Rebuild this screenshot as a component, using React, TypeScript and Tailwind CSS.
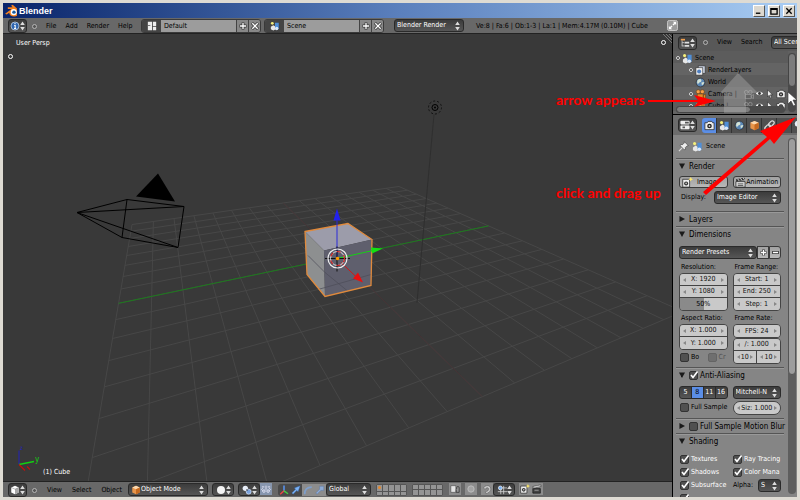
import React from 'react';

type Point = [number, number];

// corners of the grid floor on screen: far, right, near, left
const FLOOR: Point[] = [[399, 186], [683, 311], [73, 570], [132, 224]];

// maps a point of the unit square onto the floor quad
const project = (u: number, v: number): Point => {
  const [[x0, y0], [x1, y1], [x2, y2], [x3, y3]] = FLOOR;
  const dx1 = x1 - x2, dx2 = x3 - x2, sx = x0 - x1 + x2 - x3;
  const dy1 = y1 - y2, dy2 = y3 - y2, sy = y0 - y1 + y2 - y3;
  const det = dx1 * dy2 - dx2 * dy1;
  const g = (sx * dy2 - dx2 * sy) / det;
  const h = (dx1 * sy - sx * dy1) / det;
  const w = g * u + h * v + 1;
  return [
    ((x1 - x0 + g * x1) * u + (x3 - x0 + h * x3) * v + x0) / w,
    ((y1 - y0 + g * y1) * u + (y3 - y0 + h * y3) * v + y0) / w,
  ];
};

const segment = (a: Point, b: Point) => `M${a[0].toFixed(1)} ${a[1].toFixed(1)}L${b[0].toFixed(1)} ${b[1].toFixed(1)}`;

const gridPath = Array.from({ length: 17 }, (_, i) => i / 16)
  .map((t) => segment(project(t, 0), project(t, 1)) + segment(project(0, t), project(1, t)))
  .join('');
const greenAxis = segment(project(0.5, 0), project(0.5, 1));
const redAxis = segment(project(0, 0.5), project(1, 0.5));

const DARK = 'border border-[#2a2a2a] bg-linear-to-b from-[#3c3c3c] to-[#565656] text-white';
const LIGHT = 'border border-[#3a3a3a] bg-linear-to-b from-[#a2a2a2] to-[#b8b8b8] text-black';

function UpDown() {
  return (
    <svg viewBox="0 0 5 10" className="pointer-events-none h-[10px] w-[5px] shrink-0" fill="#ddd">
      <path d="M2.5 0.5 4.8 4H.2zM2.5 9.500.2 6h4.600z" />
    </svg>
  );
}

type IconName =
  | 'info' | 'layout' | 'scene' | 'tree' | 'props' | 'camera' | 'world' | 'cube' | 'link' | 'wrench'
  | 'layers' | 'movie' | 'cubeWhite' | 'sphere' | 'pivot' | 'manip' | 'axes' | 'arrow' | 'arc' | 'scale'
  | 'lock' | 'ring' | 'magnet' | 'snap' | 'clap' | 'shot' | 'pin' | 'eye' | 'cursor' | 'full' | 'blender' | 'cam' | 'camGrey';

const ICONS: Record<IconName, React.ReactNode> = {
  blender: (
    <>
      <path d="M1 9 7 4.500H3.500V3H8L6.500 1.500 8 .8l5 4.200c2 2 1 6.500-3.500 6.500-3 0-4.500-1.500-4.700-3.500L2.500 9.800z" fill="#f58220" />
      <circle cx="9" cy="7.500" r="2.800" fill="#fff" />
      <circle cx="9.200" cy="7.500" r="1.600" fill="#1b5fa5" />
    </>
  ),
  info: (
    <>
      <circle cx="6" cy="6" r="4.800" fill="#2f66b0" stroke="#dbe6f5" strokeWidth=".8" />
      <path d="M6 2.500v1.500M5 5.300h1.200V9M4.800 9h2.600" stroke="#fff" strokeWidth="1.300" fill="none" />
    </>
  ),
  layout: (
    <>
      <path d="M1 1h5v10H1zM7 1h4v5H7zM7 7h4v4H7z" fill="#eee" />
      <path d="M1 5h3v1H1z" fill="#555" />
    </>
  ),
  scene: (
    <>
      <circle cx="2.800" cy="2.800" r="1.700" fill="#f5f07a" />
      <path d="M1 7 4 5l3 2v3L4 11.500 1 10z" fill="#e8e8e8" />
      <path d="M6 2h4.500v7.500L8 10.500 6 9z" fill="#4f8fd8" />
      <circle cx="8" cy="9" r="2" fill="#dce9fa" />
    </>
  ),
  tree: (
    <>
      <path d="M1 1h5v2H1z" fill="#f0a050" />
      <path d="M2.500 3v7M2.500 5.500H5M2.500 9.500H5" stroke="#ccc" fill="none" />
      <path d="M5.500 4.500H11v2H5.500zM5.500 8.500H11v2H5.500z" fill="#ddd" />
    </>
  ),
  props: (
    <>
      <rect x=".5" y="1" width="11" height="4.300" rx="1" fill="#eee" />
      <rect x=".5" y="6.700" width="11" height="4.300" rx="1" fill="#eee" />
      <path d="M6 2h4.500v2.300H6zM3 7.800h3V10H3z" fill="#555" />
    </>
  ),
  camera: (
    <>
      <path d="M1 3h2.500L4.500 1.500h4L9.500 3H11v7.500H1z" fill="#eee" stroke="#222" strokeWidth=".8" />
      <circle cx="6" cy="6.500" r="2.500" fill="#222" />
      <circle cx="6" cy="6.500" r="1" fill="#ccc" />
    </>
  ),
  world: (
    <>
      <circle cx="6" cy="6" r="4.800" fill="#5a86b4" stroke="#333" strokeWidth=".8" />
      <path d="M3 3c2-1.500 4-1 4 1S4 5 3.500 8C2 7 2 5 3 3zM7 6l3-.5c0 2-1 3-2.500 3.500z" fill="#d5e3d5" />
    </>
  ),
  cube: (
    <>
      <path d="m6 1 4.500 2v6L6 11.200 1.500 9V3z" fill="#e8954a" />
      <path d="m6 1 4.500 2L6 5 1.500 3z" fill="#fbd9b0" />
      <path d="M6 5v6.200L10.500 9V3z" fill="#c5691f" />
    </>
  ),
  cubeWhite: (
    <>
      <path d="m6 1 4.500 2v6L6 11.200 1.500 9V3z" fill="#fff" />
      <path d="M6 5v6.200L10.500 9V3z" fill="#a8a8a8" />
      <path d="m1.500 3 4.500 2 4.500-2" stroke="#777" strokeWidth=".6" fill="none" />
    </>
  ),
  link: (
    <g fill="none" stroke="#ddd" strokeWidth="1.300">
      <rect x="4" y="-.3" width="4" height="6.800" rx="2" transform="rotate(45 6 6)" />
      <rect x="4" y="5.500" width="4" height="6.800" rx="2" transform="rotate(45 6 6)" />
    </g>
  ),
  wrench: <path d="M2 10.500 7 5.500c-.7-2 .5-4 2.500-4L8.500 3.500l1 1 2-1c.2 2-1.500 3.500-3.500 3L3 11.500z" fill="#9db9de" />,
  layers: (
    <>
      <rect x="3.500" y="1" width="7.500" height="8" fill="#cfd8e8" stroke="#333" strokeWidth=".7" />
      <rect x="1" y="3" width="7.500" height="8" fill="#eee" stroke="#333" strokeWidth=".7" />
      <circle cx="4.500" cy="7" r="2.200" fill="#4f7fc0" />
    </>
  ),
  movie: (
    <>
      <path d="M1 5h10v6H1z" fill="#ddd" stroke="#222" strokeWidth=".8" />
      <path d="M1 2.500 10.500.8l.5 2.400L1.500 5z" fill="#333" />
      <path d="m3 2.200 1.500 2M6 1.600l1.500 2M9 1.200l1.300 1.800" stroke="#fff" strokeWidth=".9" />
      <path d="M3 7.500h6M3 9.300h6" stroke="#333" strokeWidth=".8" />
    </>
  ),
  sphere: <circle cx="6" cy="6" r="4.800" fill="#f4f4f4" />,
  pivot: (
    <>
      <circle cx="4" cy="4" r="3.200" fill="#e8eef8" />
      <circle cx="8" cy="8" r="3" fill="#7ba3dd" stroke="#dfe9f9" strokeWidth=".8" />
      <circle cx="6" cy="6" r="1" fill="#222" />
    </>
  ),
  manip: (
    <g stroke="#eef" strokeWidth="1" fill="none">
      <path d="M1 3.500h3M8 3.500h3M2 8 .8 6.500 2 5M10 8l1.200-1.500L10 5" />
      <circle cx="3.500" cy="8.500" r="1.500" />
      <circle cx="8.500" cy="8.500" r="1.500" />
      <path d="M6 2v5" />
    </g>
  ),
  axes: (
    <>
      <path d="M6 7V.5" stroke="#5b9bff" strokeWidth="1.700" />
      <path d="m6 7-4.500 4" stroke="#e44" strokeWidth="1.700" />
      <path d="m6 7 4.800 3.500" stroke="#4c4" strokeWidth="1.700" />
    </>
  ),
  arrow: <path d="m1 9.500 4.500-4.500L4 3.500 11 1 8.500 8 7 6.500 2.500 11z" fill="#7db3f5" stroke="#2b5ea5" strokeWidth=".5" />,
  arc: <path d="M2 11c0-5 3-8.500 8.500-8.500" fill="none" stroke="#7f9fcb" strokeWidth="2" />,
  scale: <path d="m1 9.500 4.500-4.500V1.500h5v5H7L2.500 11z" fill="#8facd6" stroke="#55709a" strokeWidth=".5" />,
  lock: (
    <>
      <path d="M1 2h6v8H1z" fill="#e4e4e4" stroke="#333" strokeWidth=".6" />
      <path d="M8 6V4.500c0-2 3-2 3 0V10H7.500V6.500" fill="#999" stroke="#222" strokeWidth=".8" />
    </>
  ),
  ring: <circle cx="6" cy="6" r="3.800" fill="#a4a4a4" stroke="#c2c2c2" />,
  magnet: <path d="M2 4.500C5 0 11 2 10.500 6.500 10 9.500 7 11 5 11.500L4 9.500c2.500-.5 4.500-2 4-4C7.500 4 5 4 3.500 6.500z" fill="#ccc" stroke="#555" strokeWidth=".6" />,
  snap: (
    <>
      <path d="M4.500 5.500V11M8 1v10M6 3.500h6M1 8h11" stroke="#ddd" strokeWidth=".9" />
      <circle cx="4" cy="3.500" r="2.300" fill="#7db3f5" stroke="#fff" strokeWidth=".8" />
    </>
  ),
  shot: (
    <>
      <path d="M.8 2.500h7.500v8.500H.8z" fill="#eee" stroke="#222" strokeWidth=".8" />
      <circle cx="4.500" cy="7" r="2.200" fill="#333" />
      <circle cx="4.500" cy="7" r=".9" fill="#ccc" />
      <path d="m9.500 0 .8 1.700 1.700.8-1.700.8-.8 1.700-.8-1.700L7 2.500l1.700-.8z" fill="#ffe96a" />
    </>
  ),
  clap: (
    <>
      <path d="M1 5.500h9V11H1z" fill="#444" stroke="#111" strokeWidth=".8" />
      <path d="M1 3 10.500 1l.4 2L1.500 5z" fill="#ddd" stroke="#222" strokeWidth=".6" />
      <path d="m3.500 2.500 1 1.800M6.500 2l1 1.800M3 7.500h5" stroke="#bbb" strokeWidth=".8" />
    </>
  ),
  pin: (
    <>
      <path d="M7 .8 11.200 5l-1.500.4-1.700 1.700.2 2L6.800 9.500 2.500 5.200l.5-1.400 2 .2L6.700 2.300z" fill="#eee" stroke="#333" strokeWidth=".6" />
      <path d="M4.500 7.500 1 11" stroke="#ddd" strokeWidth="1.200" />
    </>
  ),
  eye: (
    <>
      <path d="M.8 6C3 2.500 9 2.500 11.200 6 9 9.500 3 9.500.8 6z" fill="#eee" stroke="#333" strokeWidth=".6" />
      <circle cx="6" cy="6" r="1.900" fill="#333" />
    </>
  ),
  cursor: <path d="M3 1v8.500l2-2L6.500 11l1.500-.7L6.500 7H9z" fill="#eee" stroke="#222" strokeWidth=".7" />,
  full: (
    <>
      <rect x=".5" y=".5" width="11" height="11" rx="2" fill="#9a9a9a" stroke="#ccc" />
      <path d="M6.500 2H10v3.500L8.800 4.300 7 6 6 5l1.700-1.800zM5.500 10H2V6.500l1.200 1.200L5 6l1 1-1.700 1.800z" fill="#fff" />
    </>
  ),
  cam: (
    <>
      <circle cx="3.500" cy="3" r="2.200" fill="#f5a04a" stroke="#6b3a0c" strokeWidth=".6" />
      <circle cx="8" cy="3" r="2.200" fill="#f5a04a" stroke="#6b3a0c" strokeWidth=".6" />
      <path d="M2.500 5.500h6.500v5H2.500zM9 7l2.500-1.500v5L9 9.200z" fill="#e88a2a" stroke="#6b3a0c" strokeWidth=".6" />
    </>
  ),
  camGrey: (
    <g fill="none" stroke="#999" strokeWidth=".8">
      <circle cx="3.500" cy="3.500" r="2" />
      <circle cx="8" cy="3.500" r="2" />
      <path d="M2.500 6h6.500v4.500H2.500zM9 7.500 11.500 6v4.500L9 9.200z" />
    </g>
  ),
};

function Icon({ name, className = 'size-[11px]' }: { name: IconName; className?: string }) {
  return (
    <svg viewBox="0 0 12 12" className={`shrink-0 ${className}`}>
      {ICONS[name]}
    </svg>
  );
}

function EditorButton({ icon, label }: { icon: IconName; label: string }) {
  return (
    <button aria-label={label} className={`flex h-[14px] w-[19px] shrink-0 items-center justify-between rounded-[3px] px-px ${DARK}`}>
      <Icon name={icon} className="size-[10px]" />
      <UpDown />
    </button>
  );
}

function Collapse() {
  return <button aria-label="Collapse menus" className="size-[5px] shrink-0 rounded-full border border-[#b5b5b5] bg-[#555]" />;
}

function Select({ label, value, className = '', icon }: { label: string; value: string; className?: string; icon?: IconName }) {
  return (
    <div className={`flex h-[13px] shrink-0 items-center overflow-hidden rounded-[3px] pr-[3px] pl-[2px] ${DARK} ${className}`}>
      {icon && <Icon name={icon} className="size-[10px]" />}
      <select aria-label={label} className="h-[11px] min-w-0 flex-1 appearance-none truncate leading-[11px] outline-none">
        <option>{value}</option>
      </select>
      <UpDown />
    </div>
  );
}

function Datablock({ icon, value }: { icon: IconName; value: string }) {
  return (
    <div className="flex h-[14px] shrink-0 overflow-hidden rounded-[3px] border border-[#3a3a3a]">
      <button aria-label={`Browse ${value}`} className="flex w-[19px] items-center justify-center bg-[#444]">
        <Icon name={icon} className="size-[10px]" />
      </button>
      <input aria-label={`${value} name`} defaultValue={value} className="w-[75px] bg-[#9c9c9c] px-[3px] pt-px text-black" />
      <button aria-label="Add" className="flex w-[12px] items-center justify-center border-l border-[#444] bg-[#888]">
        <svg viewBox="0 0 8 8" className="size-[8px]"><path d="M4 .5v7M.5 4h7" stroke="#333" strokeWidth="2.800" /><path d="M4 1v6M1 4h6" stroke="#fff" strokeWidth="1.300" /></svg>
      </button>
      <button aria-label="Remove" className="flex w-[12px] items-center justify-center border-l border-[#444] bg-[#888]">
        <svg viewBox="0 0 8 8" className="size-[8px]"><path d="m1 1 6 6M7 1 1 7" stroke="#333" strokeWidth="2.800" /><path d="m1.300 1.300 5.400 5.400M6.700 1.300 1.300 6.700" stroke="#fff" strokeWidth="1.300" /></svg>
      </button>
    </div>
  );
}

function Check({ label, checked = false, light = false, dim = false, className = '' }: { label: string; checked?: boolean; light?: boolean; dim?: boolean; className?: string }) {
  return (
    <label className={`flex h-[13px] items-center gap-[2px] whitespace-nowrap ${light ? 'text-white' : 'text-black'} ${dim ? 'opacity-40' : ''} ${className}`}>
      <span className="grid shrink-0">
        <input type="checkbox" defaultChecked={checked} className="peer col-start-1 row-start-1 size-[9px] appearance-none rounded-[2px] border border-[#333] bg-[#505050]" />
        <svg viewBox="0 0 9 9" className="pointer-events-none invisible col-start-1 row-start-1 size-[9px] overflow-visible peer-checked:visible">
          <path d="M2 4 4 6.500 8.500.5" fill="none" stroke="#fff" strokeWidth="1.600" />
        </svg>
      </span>
      {label}
    </label>
  );
}

function NumberField({ value, className = '' }: { value: string; className?: string }) {
  return (
    <div className={`flex h-[12px] min-w-0 flex-1 items-center bg-[#c9c9c9] px-[3px] text-[#111] ${className}`}>
      <svg viewBox="0 0 3 4" className="h-[4px] w-[3px] shrink-0"><path d="M3 0v4L0 2z" fill="#888" /></svg>
      <input aria-label={value} defaultValue={value} className="min-w-0 flex-1 text-center" />
      <svg viewBox="0 0 3 4" className="h-[4px] w-[3px] shrink-0"><path d="M0 0v4l3-2z" fill="#888" /></svg>
    </div>
  );
}

function Section({ title, open = false, check, children }: { title: string; open?: boolean; check?: boolean; children?: React.ReactNode }) {
  return (
    <section className="border-t border-[#555] shadow-[inset_0_1px_0_#999]">
      <h2 className="flex h-[14px] items-center gap-[4px] pl-[3px] text-[8px] whitespace-nowrap text-black">
        <svg viewBox="0 0 7 7" className="size-[6px] shrink-0" fill="#1a1a1a">
          <path d={open ? 'M0 .5h7L3.500 7z' : 'M.5 0 7 3.500.5 7z'} />
        </svg>
        {check === undefined ? title : <Check label={title} checked={check} />}
      </h2>
      {children && <div className="px-[3px]">{children}</div>}
    </section>
  );
}

function TreeRow({ icon, label, indent, restrict, toggle = true }: { icon: IconName; label: string; indent: string; restrict?: boolean; toggle?: boolean }) {
  return (
    <li className={`flex h-[12px] items-center gap-[2px] text-black ${indent}`}>
      <span className={`size-[4px] shrink-0 rounded-full border ${toggle ? 'border-[#ddd] bg-[#333]' : 'border-transparent'}`} />
      <Icon name={icon} />
      <span className="flex-1">{label}</span>
      {restrict && (
        <span className="flex gap-px pr-[2px]">
          <Icon name="camGrey" />
          <Icon name="eye" className="size-[9px]" />
          <Icon name="cursor" className="size-[10px]" />
          <Icon name="camera" className="size-[10px]" />
        </span>
      )}
    </li>
  );
}

function TitleBar() {
  return (
    <header className="flex h-[15px] shrink-0 items-center gap-[2px] bg-linear-to-r from-[#0a246a] via-[#5b80bd] to-[#a9cdf3] pr-px pl-px">
      <Icon name="blender" className="size-[13px]" />
      <h1 className="flex-1 font-['Liberation_Sans',sans-serif] text-[9px] leading-[14px] font-bold text-white">Blender</h1>
      {['M1 7h5', 'M1 2h7v6H1zM1 2.500h7', 'm1.500 1.500 6 6M7.500 1.500l-6 6'].map((d, i) => (
        <button
          key={d}
          aria-label={['Minimize', 'Maximize', 'Close'][i]}
          className="mr-px flex h-[12px] w-[12px] items-center justify-center border border-t-white border-r-[#555] border-b-[#555] border-l-white bg-[#dcd8cf]"
        >
          <svg viewBox="0 0 9 9" className="size-[8px]"><path d={d} fill="none" stroke="#000" strokeWidth="1.500" /></svg>
        </button>
      ))}
    </header>
  );
}

function InfoHeader() {
  return (
    <div className="flex h-[16px] shrink-0 items-center overflow-hidden border-b border-[#222] bg-[#686868] pl-[5px] text-black">
      <EditorButton icon="info" label="Info editor" />
      <div className="ml-[5px] flex w-[104px] items-center gap-[9px] pt-px">
        <Collapse />
        {['File', 'Add', 'Render', 'Help'].map((m) => <button key={m}>{m}</button>)}
      </div>
      <div className="ml-[5px] flex items-center gap-[3px]">
        <Datablock icon="layout" value="Default" />
        <Datablock icon="scene" value="Scene" />
      </div>
      <Select label="Render engine" value="Blender Render" className="ml-[10px] w-[70px]" />
      <p className="ml-[12px] w-[191px] pt-px whitespace-nowrap">Ve:8 | Fa:6 | Ob:1-3 | La:1 | Mem:4.17M (0.10M) | Cube</p>
      <button aria-label="Full screen"><Icon name="full" /></button>
    </div>
  );
}

function Viewport() {
  return (
    <div className="relative min-h-0 flex-1 overflow-hidden bg-[#393939] text-white">
      <svg viewBox="3 33 669 448" preserveAspectRatio="xMidYMid slice" className="absolute inset-0 size-full">
        <path d={gridPath} stroke="#474747" fill="none" />
        <path d={redAxis} stroke="#453436" fill="none" />
        <path d={greenAxis} stroke="#1c7a1c" fill="none" />

        {/* lamp */}
        <path d="M434 114 417 302" stroke="#2f2f2f" />
        <circle cx="435" cy="107" r="3" fill="none" stroke="#000" />
        <circle cx="435" cy="107" r="6.500" fill="none" stroke="#111" strokeDasharray="2 2" />
        <circle cx="435" cy="107" r="1" fill="#000" />

        {/* camera */}
        <path d="m158 173 17 28-39-5z" fill="#000" />
        <path d="m77 212 50-13 57 7-6 41-56-10zM77 212l107-6M77 212l101 35M127 199l-5 38" fill="none" stroke="#000" />

        {/* cube */}
        <path d="m305 231 43-8 24 16-48 11z" fill="#9c9caa" />
        <path d="m305 231 19 19 1 46-18-22z" fill="#8d8f90" />
        <path d="m324 250 48-11-1 46-46 11z" fill="#5f5f6d" />
        <path d="m308 255 17 17 22 18M318 289l53-15" stroke="#4c4c57" fill="none" strokeWidth=".7" />
        <path d="m305 231 43-8 24 16-1 46-46 11-18-22z" fill="none" stroke="#e08a3c" strokeWidth="1.300" />

        {/* manipulator */}
        <path d="M337 258V220" stroke="#2a2ad8" />
        <path d="m337 208 3.500 12h-7z" fill="#2222ee" />
        <path d="m337 258 36-8" stroke="#16d016" />
        <path d="m383 248-11 5-1-6z" fill="#12e012" />
        <path d="m341 262 17 16" stroke="#d01818" />
        <path d="m363 282-10-4 5-6z" fill="#e81010" />
        <path d="M325 258h25M337 246v25" stroke="#111" />
        <circle cx="337.500" cy="258" r="9.500" fill="none" stroke="#eee" strokeWidth="1.200" />
        <circle cx="337.500" cy="258" r="7" fill="none" stroke="#ddd" />
        <circle cx="337.500" cy="258" r="7" fill="none" stroke="#c22" strokeWidth="1.200" strokeDasharray="4 4" />
        <circle cx="337.500" cy="258" r="1.800" fill="#f90" />

        {/* mini axis */}
        <path d="M19 464V450" stroke="#2222bb" />
        <path d="m19 464 15-3" stroke="#12d012" strokeWidth="1.300" />
        <path d="m19 464 6 6M27 466l3 3" stroke="#c01010" strokeWidth="1.300" />
        <text x="35" y="461" fill="#12d012" fontSize="8">y</text>
        <text x="20" y="449" fill="#2222bb" fontSize="6">z</text>
      </svg>
      <div className="relative flex h-full flex-col items-start pt-[4px] pb-[3px]">
        <p className="pl-[13px]">User Persp</p>
        <button aria-label="Show tool shelf" className="mt-[5px] ml-[5px] size-[5px] rounded-full border border-white" />
        <p className="mt-auto pl-[40px]">(1) Cube</p>
      </div>
      <button aria-label="Show properties" className="absolute top-[6px] right-[6px] size-[5px] rounded-full border border-white" />
      <Grip className="absolute top-0 right-0" />
    </div>
  );
}

function Grip({ className = '' }: { className?: string }) {
  return (
    <svg viewBox="0 0 9 9" className={`size-[9px] ${className}`} stroke="#888" strokeWidth=".8">
      <path d="m0 0 9 9M3 0l6 6M6 0l3 3" />
    </svg>
  );
}

function LayerGrid({ active = false }: { active?: boolean }) {
  return (
    <div className="grid h-[12px] w-[31px] shrink-0 grid-cols-5 gap-px rounded-[2px] border border-[#555] bg-[#555]">
      {Array.from({ length: 10 }, (_, i) => (
        <button key={i} aria-label={`Layer ${i + 1}`} className="flex items-center justify-center bg-[#949494]">
          {active && i === 0 && <span className="size-[3px] rounded-full bg-[#e8892a]" />}
        </button>
      ))}
    </div>
  );
}

function Tool({ icon, className = 'bg-[#8c8c8c]' }: { icon: IconName; className?: string }) {
  return (
    <button aria-label={icon} className={`flex h-[12px] w-[12px] shrink-0 items-center justify-center ${className}`}>
      <Icon name={icon} className="size-[10px]" />
    </button>
  );
}

function MenuButton({ icon }: { icon: IconName }) {
  return (
    <button aria-label={icon} className={`flex h-[13px] w-[22px] shrink-0 items-center justify-between rounded-[3px] px-[3px] ${DARK}`}>
      <Icon name={icon} className="size-[10px]" />
      <UpDown />
    </button>
  );
}

function ViewportHeader() {
  return (
    <div className="flex h-[16px] shrink-0 items-center overflow-hidden border-t border-[#222] bg-[#686868] pl-[5px] text-black">
      <EditorButton icon="cubeWhite" label="3D view editor" />
      <div className="ml-[5px] flex w-[94px] items-center gap-[10px] pt-px">
        <Collapse />
        {['View', 'Select', 'Object'].map((m) => <button key={m}>{m}</button>)}
      </div>
      <Select label="Mode" value="Object Mode" icon="cube" className="ml-[2px] w-[80px]" />
      <div className="ml-[4px] flex gap-[4px]">
        <MenuButton icon="sphere" />
        <div className="flex">
          <MenuButton icon="pivot" />
          <Tool icon="manip" className="bg-[#8796ae]" />
        </div>
      </div>
      <div className="ml-[6px] flex overflow-hidden rounded-l-[3px]">
        <Tool icon="axes" className="bg-[#4a4a4a]" />
        <Tool icon="arrow" className="bg-[#4a4a4a]" />
        <Tool icon="arc" />
        <Tool icon="scale" />
      </div>
      <Select label="Orientation" value="Global" className="w-[45px]" />
      <div className="ml-[5px] flex gap-[5px]">
        <LayerGrid active />
        <LayerGrid />
      </div>
      <div className="ml-[6px] flex gap-[4px]">
        <Tool icon="lock" />
        <Tool icon="ring" />
        <div className="flex">
          <Tool icon="magnet" />
          <MenuButton icon="snap" />
        </div>
        <div className="flex">
          <Tool icon="shot" />
          <Tool icon="clap" />
        </div>
      </div>
    </div>
  );
}

function Outliner() {
  return (
    <div className="shrink-0 overflow-hidden border-b border-black">
      <div className="flex h-[17px] items-center overflow-hidden bg-[#585858] pl-[5px] text-black">
        <EditorButton icon="tree" label="Outliner editor" />
        <div className="ml-[6px] flex w-[68px] shrink-0 items-center gap-[9px]">
          <Collapse />
          <button>View</button>
          <button>Search</button>
        </div>
        <Select label="Display mode" value="All Scenes" className="w-[50px]" />
      </div>
      <div className="relative flex h-[63px] bg-[#606060]">
        <ul className="flex-1 bg-[repeating-linear-gradient(#5c5c5c_0_12px,#646464_12px_24px)] pt-px">
          <TreeRow icon="scene" label="Scene" indent="pl-[3px]" />
          <TreeRow icon="layers" label="RenderLayers" indent="pl-[16px]" />
          <TreeRow icon="world" label="World" indent="pl-[16px]" toggle={false} />
          <TreeRow icon="cam" label="Camera  |" indent="pl-[16px]" restrict />
          <TreeRow icon="cube" label="Cube  |" indent="pl-[16px]" restrict />
        </ul>
        <div className="my-[2px] mr-px w-[8px] rounded-full bg-[#4a4a4a]">
          <div className="h-[34px] rounded-full border border-[#444] bg-[#7c7c7c]" />
        </div>
        <div className="absolute right-[12px] bottom-px left-[3px] h-[7px] rounded-full bg-[#4a4a4a]">
          <div className="h-[7px] w-[75px] rounded-full border border-[#444] bg-[#7c7c7c]" />
        </div>
      </div>
    </div>
  );
}

function Properties() {
  const tabs: IconName[] = ['camera', 'scene', 'world', 'cube', 'link', 'wrench', 'pivot'];
  return (
    <div className="flex min-h-0 flex-1 flex-col bg-[#858585]">
      <div className="flex h-[20px] shrink-0 items-center overflow-hidden bg-[#6c6c6c] pl-[5px]">
        <EditorButton icon="props" label="Properties editor" />
        <div className="ml-[5px] flex overflow-hidden rounded-l-[3px]">
          {tabs.map((t, i) => (
            <button key={t} aria-label={`${t} tab`} className={`flex h-[15px] w-[15px] shrink-0 items-center justify-center border-r border-[#333] ${i === 0 ? 'bg-[#5b8ee6]' : 'bg-[#505050]'}`}>
              <Icon name={t} />
            </button>
          ))}
        </div>
      </div>
      <div className="flex min-h-0 flex-1">
        <div className="min-w-0 flex-1 overflow-hidden pr-[4px] pl-[3px]">
          <div className="flex h-[23px] items-center gap-[3px] pl-[2px] text-black">
            <Icon name="pin" />
            <Icon name="scene" />
            <span>Scene</span>
          </div>
          <Section title="Render" open>
            <div className="grid grid-cols-2 gap-[5px] pt-[3px]">
              <button className={`flex h-[12px] items-center gap-[4px] rounded-[3px] pl-[2px] ${LIGHT}`}>
                <Icon name="shot" />
                Image
              </button>
              <button className={`flex h-[12px] items-center justify-center rounded-[3px] ${LIGHT}`}>
                <Icon name="movie" />
                Animation
              </button>
            </div>
            <div className="flex items-center justify-between pt-[3px] pb-[7px] text-black">
              <span className="pl-[2px]">Display:</span>
              <Select label="Display" value="Image Editor" className="w-[67px]" />
            </div>
          </Section>
          <Section title="Layers" />
          <Section title="Dimensions" open>
            <div className="flex pt-[5px]">
              <Select label="Render presets" value="Render Presets" className="flex-1" />
              <button aria-label="Add preset" className={`flex h-[13px] w-[12px] items-center justify-center ${LIGHT}`}>
                <svg viewBox="0 0 8 8" className="size-[7px]"><path d="M4 .5v7M.5 4h7" stroke="#333" strokeWidth="3" /><path d="M4 1v6M1 4h6" stroke="#fff" strokeWidth="1.500" /></svg>
              </button>
              <button aria-label="Remove preset" className={`flex h-[13px] w-[12px] items-center justify-center rounded-r-[3px] ${LIGHT}`}>
                <svg viewBox="0 0 8 8" className="size-[7px]"><path d="M0 4h8" stroke="#333" strokeWidth="3" /><path d="M1 4h6" stroke="#fff" strokeWidth="1.500" /></svg>
              </button>
            </div>
            <div className="grid grid-cols-2 gap-[5px] pt-[2px] pb-[3px] text-black">
              <div>
                <p className="h-[12px] pl-[2px] leading-[12px]">Resolution:</p>
                <div className="divide-y divide-[#444] overflow-hidden rounded-[4px] border border-[#444]">
                  <NumberField value="X: 1920" />
                  <NumberField value="Y: 1080" />
                  <div className="bg-linear-to-r from-[#8a8a8a] from-50% to-[#c9c9c9] to-50%">
                    <input aria-label="Resolution percentage" defaultValue="50%" className="h-[12px] w-full text-center" />
                  </div>
                </div>
                <p className="mt-px h-[12px] pl-[2px] leading-[12px]">Aspect Ratio:</p>
                <div className="divide-y divide-[#444] overflow-hidden rounded-[4px] border border-[#444]">
                  <NumberField value="X: 1.000" />
                  <NumberField value="Y: 1.000" />
                </div>
                <div className="flex justify-between pt-px pr-[2px] pl-px">
                  <Check label="Bo" />
                  <Check label="Cr" dim />
                </div>
              </div>
              <div>
                <p className="h-[12px] pl-[2px] leading-[12px]">Frame Range:</p>
                <div className="divide-y divide-[#444] overflow-hidden rounded-[4px] border border-[#444]">
                  <NumberField value="Start: 1" />
                  <NumberField value="End: 250" />
                  <NumberField value="Step: 1" />
                </div>
                <p className="mt-px h-[12px] pl-[2px] leading-[12px]">Frame Rate:</p>
                <div className="overflow-hidden rounded-[4px] border border-[#444]">
                  <NumberField value="FPS: 24" />
                </div>
                <div className="divide-y divide-[#444] overflow-hidden rounded-[4px] border border-[#444]">
                  <NumberField value="/: 1.000" />
                  <div className="flex divide-x divide-[#444]">
                    <NumberField value="10" />
                    <NumberField value="10" />
                  </div>
                </div>
              </div>
            </div>
          </Section>
          <Section title="Anti-Aliasing" open check>
            <div className="grid grid-cols-2 gap-x-[5px] gap-y-[2px] pt-[4px] pb-[3px]">
              <div className={`flex h-[13px] overflow-hidden rounded-[3px] ${DARK}`}>
                {['5', '8', '11', '16'].map((n) => (
                  <button key={n} className={`flex-1 border-r border-[#2a2a2a] last:border-r-0 ${n === '8' ? 'bg-[#5b8ee6] text-black' : ''}`}>{n}</button>
                ))}
              </div>
              <Select label="Filter" value="Mitchell-N" />
              <Check label="Full Sample" className="pl-px" />
              <div className="flex overflow-hidden rounded-full border border-[#444]">
                <NumberField value="Siz: 1.000" />
              </div>
            </div>
          </Section>
          <Section title="Full Sample Motion Blur" check={false} />
          <Section title="Shading" open>
            <div className="grid grid-cols-2 gap-x-[5px] overflow-hidden pt-[5px] pl-px">
              <Check label="Textures" checked light />
              <Check label="Ray Tracing" checked light />
              <Check label="Shadows" checked light />
              <Check label="Color Mana" checked light />
              <Check label="Subsurface" checked light />
              <div className="flex items-center justify-between text-black">
                Alpha:
                <Select label="Alpha" value="S" className="w-[23px]" />
              </div>
              <Check label="" checked light />
            </div>
          </Section>
        </div>
        <div className="my-[3px] mr-px w-[8px] rounded-full bg-[#5e5e5e]">
          <div className="h-2/3 rounded-full border border-[#555] bg-[#9d9d9d]" />
        </div>
      </div>
    </div>
  );
}

function Annotations() {
  return (
    <svg viewBox="550 60 250 150" className="pointer-events-none absolute top-[57px] -right-[3px] h-[150px] w-[250px]">
      <path d="m738 73 20 20h-12v20h-22V93h-4z" fill="#bbb" opacity=".35" />
      <path d="M788 92v12l3-3 2.500 5 2-1-2.500-5h4z" fill="#fff" stroke="#333" strokeWidth=".6" />
      <g fill="#f00">
        <path d="M648 100h50l-4-5 22 6-22 6 4-5h-50z" />
        <path d="m703 192 64-55-7-6 36-14-22 27-4-5-64 56z" />
        <g fontFamily="Lato, sans-serif" fontWeight="700" fontSize="14">
          <text x="556" y="105">arrow appears</text>
          <text x="556" y="198">click and drag up</text>
        </g>
      </g>
    </svg>
  );
}

export default function App() {
  return (
    <main className="relative flex h-screen flex-col overflow-hidden border-[3px] border-[#dedbd3] bg-[#dedbd3] font-[DejaVu_Sans_Condensed,DejaVu_Sans,sans-serif] text-[7px] leading-[11px]">
      <TitleBar />
      <InfoHeader />
      <div className="flex min-h-0 flex-1">
        <div className="flex min-w-0 flex-1 flex-col">
          <Viewport />
          <ViewportHeader />
        </div>
        <aside className="flex w-[125px] shrink-0 flex-col overflow-hidden border-l border-black">
          <Outliner />
          <Properties />
        </aside>
      </div>
      <Annotations />
    </main>
  );
}
